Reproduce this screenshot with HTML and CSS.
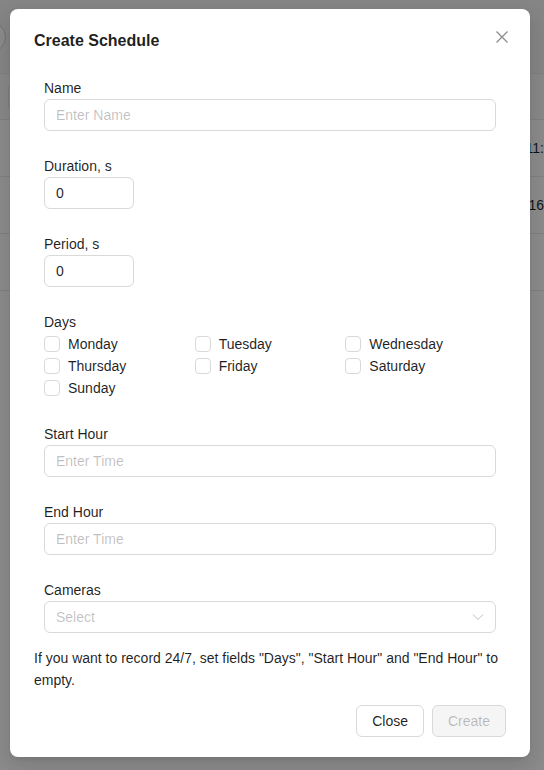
FILE: index.html
```html
<!DOCTYPE html>
<html>
<head>
<meta charset="utf-8">
<link rel="stylesheet" href="styles.css">
</head>
<body>
<div class="page">
  <div class="toolbar"><span class="round-btn"></span></div>
  <div class="table">
    <div class="thead"><span class="col-sep"></span></div>
    <div class="row"><span class="cell-text">11:</span></div>
    <div class="row"><span class="cell-text">16</span></div>
    <div class="row"></div>
  </div>
</div>
<div class="mask"></div>
<div class="modal">
  <div class="modal-header">
    <div class="modal-title">Create Schedule</div>
    <button class="modal-close" aria-label="Close">
      <svg width="14" height="14" viewBox="0 0 14 14"><path d="M1.5 1.5 L12.5 12.5 M12.5 1.5 L1.5 12.5" stroke="currentColor" stroke-width="1.3" fill="none"/></svg>
    </button>
  </div>
  <form class="form">
    <div class="item">
      <label class="label">Name</label>
      <input class="input" placeholder="Enter Name">
    </div>
    <div class="item">
      <label class="label">Duration, s</label>
      <input class="input small" value="0">
    </div>
    <div class="item">
      <label class="label">Period, s</label>
      <input class="input small" value="0">
    </div>
    <div class="item">
      <label class="label">Days</label>
      <div class="days">
        <label class="check"><span class="box"></span>Monday</label>
        <label class="check"><span class="box"></span>Tuesday</label>
        <label class="check"><span class="box"></span>Wednesday</label>
        <label class="check"><span class="box"></span>Thursday</label>
        <label class="check"><span class="box"></span>Friday</label>
        <label class="check"><span class="box"></span>Saturday</label>
        <label class="check"><span class="box"></span>Sunday</label>
      </div>
    </div>
    <div class="item">
      <label class="label">Start Hour</label>
      <input class="input" placeholder="Enter Time">
    </div>
    <div class="item">
      <label class="label">End Hour</label>
      <input class="input" placeholder="Enter Time">
    </div>
    <div class="item last">
      <label class="label">Cameras</label>
      <div class="select">
        <span class="placeholder">Select</span>
        <svg class="arrow" width="12" height="12" viewBox="0 0 12 12"><path d="M1 3.5 L6 8.5 L11 3.5" stroke="currentColor" stroke-width="1" fill="none"/></svg>
      </div>
    </div>
  </form>
  <p class="note">If you want to record 24/7, set fields "Days", "Start Hour" and "End Hour" to empty.</p>
  <div class="footer">
    <button class="btn">Close</button>
    <button class="btn disabled">Create</button>
  </div>
</div>
</body>
</html>
```

FILE: styles.css
```css
* { box-sizing: border-box; }
html, body { margin: 0; padding: 0; }
body {
  width: 544px;
  height: 770px;
  overflow: hidden;
  background: #fff;
  font-family: "Liberation Sans", Arial, sans-serif;
  font-size: 14px;
  color: rgba(0,0,0,0.88);
  position: relative;
}
.page { width: 544px; }
.toolbar {
  height: 73px;
  background: #f5f5f5;
  position: relative;
}
.round-btn {
  position: absolute;
  left: -26px;
  top: 21px;
  width: 32px;
  height: 32px;
  border: 1px solid #d0d0d0;
  border-radius: 50%;
  background: #fff;
}
.thead {
  height: 47px;
  background: #fafafa;
  border-top: 1px solid #eaeaea;
  border-bottom: 1px solid #eaeaea;
  display: flex;
  align-items: center;
  padding-left: 8px;
}
.col-sep {
  width: 1px;
  height: 22px;
  background: #e6e6e6;
}
.row {
  height: 57px;
  border-bottom: 1px solid #eaeaea;
  display: flex;
  align-items: center;
  justify-content: flex-end;
}
.cell-text {
  margin-right: 0;
  font-size: 14px;
  color: rgba(0,0,0,0.88);
}
.mask {
  position: absolute;
  inset: 0;
  background: rgba(0,0,0,0.45);
}
.modal {
  position: absolute;
  left: 10px;
  top: 9px;
  width: 520px;
  height: 748px;
  background: #fff;
  border-radius: 8px;
  padding: 20px 24px;
  box-shadow: 0 6px 16px rgba(0,0,0,0.08), 0 3px 6px -4px rgba(0,0,0,0.12), 0 9px 28px 8px rgba(0,0,0,0.05);
}
.modal-header {
  margin-bottom: 8px;
}
.modal-title {
  font-size: 16px;
  font-weight: 700;
  line-height: 24px;
}
.modal-close {
  position: absolute;
  top: 16px;
  right: 16px;
  width: 24px;
  height: 24px;
  border: 0;
  background: transparent;
  padding: 0;
  color: rgba(0,0,0,0.45);
  display: flex;
  align-items: center;
  justify-content: center;
}
.form {
  padding: 16px 10px 0;
  margin: 0;
}
.item { margin-bottom: 24px; display: flex; flex-direction: column; }
.item.last { margin-bottom: 0; }
.label {
  line-height: 22px;
  height: 22px;
  font-size: 14px;
}
.input {
  height: 32px;
  width: 100%;
  border: 1px solid #d9d9d9;
  border-radius: 6px;
  padding: 4px 11px;
  font-family: inherit;
  font-size: 14px;
  color: rgba(0,0,0,0.88);
  background: #fff;
  outline: none;
}
.input::placeholder { color: rgba(0,0,0,0.25); }
.input.small { width: 90px; }
.days {
  display: grid;
  grid-template-columns: repeat(3, 1fr);
}
.check {
  display: flex;
  align-items: center;
  height: 22px;
  line-height: 22px;
  gap: 8px;
}
.box {
  width: 16px;
  height: 16px;
  border: 1px solid #d9d9d9;
  border-radius: 4px;
  background: #fff;
}
.select {
  height: 32px;
  border: 1px solid #d9d9d9;
  border-radius: 6px;
  padding: 0 11px;
  display: flex;
  align-items: center;
  justify-content: space-between;
}
.placeholder { color: rgba(0,0,0,0.25); }
.arrow { color: rgba(0,0,0,0.25); }
.note {
  margin: 14px 0 0;
  line-height: 22px;
}
.footer {
  margin-top: 14px;
  display: flex;
  justify-content: flex-end;
  gap: 8px;
}
.btn {
  height: 32px;
  padding: 4px 15px;
  border: 1px solid #d9d9d9;
  border-radius: 6px;
  background: #fff;
  font-family: inherit;
  font-size: 14px;
  color: rgba(0,0,0,0.88);
}
.btn.disabled {
  background: rgba(0,0,0,0.04);
  color: rgba(0,0,0,0.25);
}
```
